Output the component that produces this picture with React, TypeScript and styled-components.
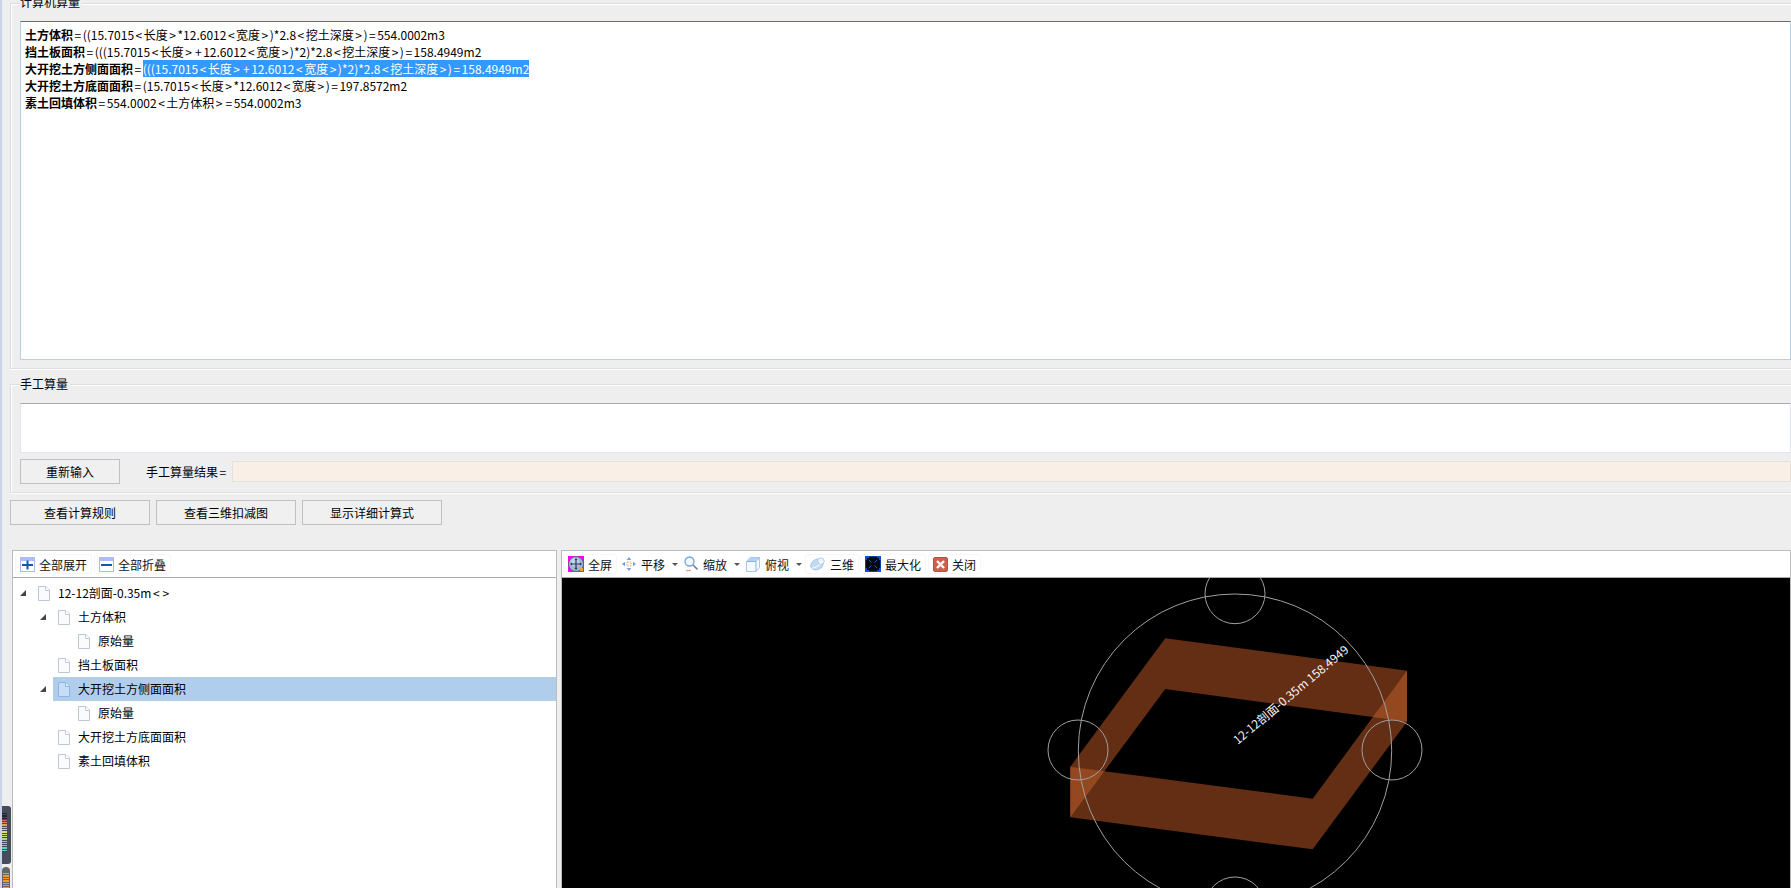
import React from "react";
import styled, { createGlobalStyle } from "styled-components";

const Global = createGlobalStyle`
  html, body { margin: 0; padding: 0; height: 888px; overflow: hidden; background: #eeeeee; }
  body { font-family: "Noto Sans CJK SC", "Liberation Sans", sans-serif; font-size: 12px; color: #000; }
`;

const Page = styled.div`
  position: relative;
  box-sizing: border-box;
  width: 1791px;
  height: 888px;
  overflow: hidden;
  background: #eeeeee;
  border-left: 2px solid #cbd4e6;
  display: flex;
  flex-direction: column;
`;

const Group = styled.section<{ $height: number; $top: number }>`
  position: relative;
  box-sizing: border-box;
  flex: none;
  height: ${(p) => p.$height}px;
  margin: ${(p) => p.$top}px -10px 0 8px;
  padding: 17px 9px 0;
  border: 1px solid #dcdcdc;
  box-shadow: inset 1px 1px 0 #fff, 0 1px 0 #fff;
`;

const Legend = styled.div<{ $top: number }>`
  position: absolute;
  left: 9px;
  top: ${(p) => p.$top}px;
  line-height: 16px;
  padding-right: 2px;
  background: #eeeeee;
`;

const Formulas = styled.div`
  box-sizing: border-box;
  height: 339px;
  padding: 4px 4px;
  background: #fff;
  border: 1px solid #b8d0e4;
  border-top-color: #3e78a8;
  line-height: 17px;
`;

const FormulaLine = styled.div`
  height: 17px;
  white-space: nowrap;
`;

const FormulaName = styled.b`
  font-weight: 700;
`;

const Selected = styled.span`
  background: #3399ff;
  color: #fff;
`;

const Sym = styled.span`
  padding: 0 1.5px;
`;

const Editor = styled.div`
  box-sizing: border-box;
  height: 50px;
  margin-top: 1px;
  background: #fff;
  border: 1px solid #dfe4ee;
  border-top-color: #aaaaaa;
`;

const InputRow = styled.div`
  display: flex;
  align-items: center;
  height: 25px;
  margin-top: 6px;
`;

const Button = styled.button<{ $width: number }>`
  box-sizing: border-box;
  flex: none;
  width: ${(p) => p.$width}px;
  height: 25px;
  padding: 0;
  background: #f0f0f0;
  border: 1px solid #c0c0c0;
  font: inherit;
  color: #000;
`;

const ResultLabel = styled.span`
  margin-left: 26px;
  width: 86px;
  flex: none;
  white-space: nowrap;
`;

const ResultBox = styled.div`
  flex: 1;
  height: 21px;
  box-sizing: border-box;
  background: #f9efe6;
  border: 1px solid #e6e0da;
`;

const ActionRow = styled.div`
  display: flex;
  gap: 6px;
  flex: none;
  margin: 7px 0 0 8px;
`;

const Workspace = styled.div`
  display: flex;
  flex: 1;
  gap: 4px;
  min-height: 0;
  margin: 25px 0 0 10px;
`;

const Panel = styled.div<{ $width?: number }>`
  box-sizing: border-box;
  ${(p) => (p.$width ? `width: ${p.$width}px; flex: none;` : "flex: 1;")}
  display: flex;
  flex-direction: column;
  background: #fff;
  border: 1px solid #bcbcbc;
  border-bottom: none;
  min-width: 0;
`;

const Toolbar = styled.div<{ $inset: number }>`
  box-sizing: border-box;
  flex: none;
  height: 27px;
  display: flex;
  align-items: center;
  padding-left: ${(p) => p.$inset}px;
  background: #fff;
  border-bottom: 1px solid #aaaaaa;
`;

const Tool = styled.div<{ $outlined?: boolean; $after?: number; $gap?: number }>`
  display: flex;
  align-items: center;
  box-sizing: border-box;
  height: 20px;
  gap: ${(p) => p.$gap ?? 4}px;
  padding: 0 ${(p) => (p.$outlined ? 4 : 0)}px;
  border: ${(p) => (p.$outlined ? "1px solid #f6f6f6" : "none")};
  border-radius: 3px;
  margin-right: ${(p) => p.$after ?? 0}px;
  white-space: nowrap;
  color: #111;
  svg { display: block; flex: none; }
`;

const Caret = styled.span`
  width: 0;
  height: 0;
  margin-left: 2px;
  border-left: 3px solid transparent;
  border-right: 3px solid transparent;
  border-top: 3px solid #555;
`;

const Tree = styled.div`
  flex: 1;
  padding-top: 3px;
  background: #fff;
`;

const Row = styled.div<{ $level: number }>`
  display: flex;
  align-items: center;
  height: 24px;
  padding-left: ${(p) => 7 + p.$level * 20}px;
`;

const ArrowSlot = styled.span`
  flex: none;
  width: 13px;
  display: flex;
  align-items: center;
`;

const Node = styled.div<{ $selected?: boolean }>`
  flex: 1;
  height: 24px;
  display: flex;
  align-items: center;
  gap: 8px;
  padding-left: 5px;
  background: ${(p) => (p.$selected ? "#b1cdec" : "transparent")};
  white-space: nowrap;
  svg { display: block; flex: none; }
`;

const NodeLabel = styled.span`
  margin-bottom: 1px;
`;

const Canvas = styled.div`
  flex: 1;
  background: #000;
  min-height: 0;
  overflow: hidden;
  svg { display: block; }
`;

const CanvasLabel = styled.text`
  font-family: "Noto Sans CJK SC", "Liberation Sans", sans-serif;
  font-size: 12px;
  fill: #f4f4f4;
`;

const MeterBody = styled.div`
  position: absolute;
  left: -2px;
  top: 806px;
  width: 11px;
  height: 58px;
  box-sizing: border-box;
  padding: 7px 0 0 2px;
  background: #474c5c;
  border-radius: 0 3px 3px 0;
  display: flex;
  flex-direction: column;
  gap: 1px;
`;

const MeterBar = styled.span<{ $color: string }>`
  display: block;
  width: 5px;
  height: 1.3px;
  background: ${(p) => p.$color};
`;

const MeterTail = styled.div`
  position: absolute;
  left: 0;
  top: 867px;
  width: 8px;
  height: 24px;
  box-sizing: border-box;
  padding: 6px 0 0 1px;
  border-radius: 4px 4px 0 0;
  background: #666;
  display: flex;
  flex-direction: column;
  gap: 1px;
`;

const TailBar = styled.span`
  display: block;
  width: 6px;
  height: 1.4px;
  background: #f09a2e;
`;

const Triangle = () => (
  <svg width="6" height="6" viewBox="0 0 6 6">
    <polygon points="6,0 6,6 0,6" fill="#444" />
  </svg>
);

const Doc = ({ selected }: { selected?: boolean }) => (
  <svg width="12" height="15" viewBox="0 0 12 15">
    <path
      d="M.5.5H8L11.5 4V14.5H.5Z"
      fill={selected ? "#c6def8" : "#fafbfd"}
      stroke={selected ? "#8fb4dc" : "#bcc6d4"}
    />
    <path d="M7.5.5V4.5H11.5" fill={selected ? "#e4f0fc" : "#fff"} stroke={selected ? "#8fb4dc" : "#c4ccd8"} />
  </svg>
);

const BoxIcon = ({ plus }: { plus?: boolean }) => (
  <svg width="15" height="15" viewBox="0 0 15 15">
    <rect x=".5" y=".5" width="14" height="14" fill="#fff" stroke="#a9b9f0" />
    <rect x="0" y="0" width="15" height="4" fill="#aebcf0" />
    <rect x="2" y="7" width="11" height="2" fill="#0b5cab" />
    {plus && <rect x="6.5" y="3.5" width="2" height="9" fill="#0b5cab" />}
  </svg>
);

const FullIcon = () => (
  <svg width="16" height="16" viewBox="0 0 16 16">
    <rect width="16" height="16" fill="#ff00ff" />
    <circle cx="8" cy="8" r="7.5" fill="#a4b6d2" stroke="#56637c" />
    <circle cx="7" cy="6" r="4" fill="#c4d2e6" />
    <path d="M8 3V13M3 8H13" stroke="#22385e" strokeWidth="1.2" />
    <path d="M8 2L6.5 4H9.5ZM8 14L6.5 12H9.5ZM2 8L4 6.5V9.5ZM14 8L12 6.5V9.5Z" fill="#22385e" />
    <rect x="12" y="12" width="3" height="3" fill="#e8a040" />
  </svg>
);

const PanIcon = () => (
  <svg width="14" height="16" viewBox="0 0 14 16">
    <path d="M7 1L4.8 4H9.2ZM7 15L4.8 12H9.2ZM0 8L3 5.8V10.2ZM14 8L11 5.8V10.2Z" fill="#6f9fdc" />
    <rect x="5" y="6" width="4" height="4" fill="#fff" stroke="#eaa26a" strokeDasharray="1.5 1" />
  </svg>
);

const ZoomIcon = () => (
  <svg width="14" height="16" viewBox="0 0 14 16">
    <circle cx="5.5" cy="5.5" r="4.5" fill="#f4f9ff" stroke="#6ea4dc" strokeWidth="1.3" />
    <path d="M9 9L13.5 13.5" stroke="#77808c" strokeWidth="1.6" />
    <path d="M2 14.5H7" stroke="#eaa27a" />
    <path d="M2 14.5L3.5 13.3V15.7ZM7 14.5L5.5 13.3V15.7Z" fill="#eaa27a" />
  </svg>
);

const CubeIcon = () => (
  <svg width="14" height="15" viewBox="0 0 14 15">
    <path d="M4 .5H13.5V10.5L10 14.5H.5V4.5Z" fill="#f6faff" stroke="#a8c8ec" />
    <path d="M.5 4.5H10V14.5M10 4.5L13.5 .5" fill="none" stroke="#8cb4e2" />
    <path d="M4 1H13L10 4H1.5Z" fill="#b4d2f2" />
  </svg>
);

const PlanetIcon = () => (
  <svg width="15" height="14" viewBox="0 0 15 14">
    <ellipse cx="7" cy="7.5" rx="6.5" ry="5" transform="rotate(-30 7 7.5)" fill="#c4daf2" stroke="#a8c6e8" />
    <circle cx="11" cy="4" r="3.2" fill="#ecf4fc" stroke="#b4cee9" />
    <path d="M2 11C6 11 10 8 13 4" stroke="#fff" fill="none" />
  </svg>
);

const MaxIcon = () => (
  <svg width="16" height="16" viewBox="0 0 16 16">
    <rect x=".5" y=".5" width="15" height="15" fill="#000814" stroke="#0a3fb0" />
    <path d="M0 0H4V2H2V4H0ZM16 0V4H14V2H12V0ZM0 16V12H2V14H4V16ZM16 16H12V14H14V12H16Z" fill="#0b50d8" />
    <path d="M4 4L6.5 6.5M12 4L9.5 6.5M4 12L6.5 9.5M12 12L9.5 9.5" stroke="#245ab0" />
  </svg>
);

const CloseIcon = () => (
  <svg width="15" height="15" viewBox="0 0 15 15">
    <rect x=".5" y=".5" width="14" height="14" rx="1.5" fill="#d0604a" stroke="#a4584c" />
    <path d="M4 4L11 11M11 4L4 11" stroke="#fff" strokeWidth="2.4" />
  </svg>
);

const withSymbols = (text: string) =>
  text.split(/([<>=+])/).map((part, i) =>
    /^[<>=+]$/.test(part) ? <Sym key={i}>{part}</Sym> : part
  );

const formulas: [string, string, boolean?][] = [
  ["土方体积", "((15.7015<长度>*12.6012<宽度>)*2.8<挖土深度>)=554.0002m3"],
  ["挡土板面积", "(((15.7015<长度>+12.6012<宽度>)*2)*2.8<挖土深度>)=158.4949m2"],
  ["大开挖土方侧面面积", "(((15.7015<长度>+12.6012<宽度>)*2)*2.8<挖土深度>)=158.4949m2", true],
  ["大开挖土方底面面积", "(15.7015<长度>*12.6012<宽度>)=197.8572m2"],
  ["素土回填体积", "554.0002<土方体积>=554.0002m3"],
];

const treeRows: { level: number; label: string; open?: boolean; selected?: boolean }[] = [
  { level: 0, label: "12-12剖面-0.35m<>", open: true },
  { level: 1, label: "土方体积", open: true },
  { level: 2, label: "原始量" },
  { level: 1, label: "挡土板面积" },
  { level: 1, label: "大开挖土方侧面面积", open: true, selected: true },
  { level: 2, label: "原始量" },
  { level: 1, label: "大开挖土方底面面积" },
  { level: 1, label: "素土回填体积" },
];

const meterColors = [
  "#d06a5c", "#d8885c", "#e0a060", "#e4b868", "#e6cc70", "#e4d878", "#dcdc7c", "#c4dc7c",
  "#a8d880", "#90d488", "#7cd498", "#6cd4ac", "#60d0c0", "#5ccccc",
];

export default function App() {
  return (
    <Page>
      <Global />
      <Group $height={366} $top={3}>
        <Legend $top={-10}>计算机算量</Legend>
        <Formulas>
          {formulas.map(([name, value, selected]) => (
            <FormulaLine key={name}>
              <FormulaName>{name}</FormulaName>
              <Sym>=</Sym>
              {selected ? <Selected>{withSymbols(value)}</Selected> : withSymbols(value)}
            </FormulaLine>
          ))}
        </Formulas>
      </Group>

      <Group $height={109} $top={15}>
        <Legend $top={-9}>手工算量</Legend>
        <Editor />
        <InputRow>
          <Button $width={100}>重新输入</Button>
          <ResultLabel>手工算量结果<Sym>=</Sym></ResultLabel>
          <ResultBox />
        </InputRow>
      </Group>

      <ActionRow>
        <Button $width={140}>查看计算规则</Button>
        <Button $width={140}>查看三维扣减图</Button>
        <Button $width={140}>显示详细计算式</Button>
      </ActionRow>

      <Workspace>
        <Panel $width={545}>
          <Toolbar $inset={2}>
            <Tool $outlined $after={2}><BoxIcon plus />全部展开</Tool>
            <Tool $outlined><BoxIcon />全部折叠</Tool>
          </Toolbar>
          <Tree>
            {treeRows.map((r, i) => (
              <Row key={i} $level={r.level}>
                <ArrowSlot>{r.open && <Triangle />}</ArrowSlot>
                <Node $selected={r.selected}>
                  <Doc selected={r.selected} />
                  <NodeLabel>{withSymbols(r.label)}</NodeLabel>
                </Node>
              </Row>
            ))}
          </Tree>
        </Panel>

        <Panel>
          <Toolbar $inset={1}>
            <Tool $outlined $after={5}><FullIcon />全屏</Tool>
            <Tool $gap={5} $after={6}><PanIcon />平移<Caret /></Tool>
            <Tool $gap={5} $after={6}><ZoomIcon />缩放<Caret /></Tool>
            <Tool $gap={5} $after={3}><CubeIcon />俯视<Caret /></Tool>
            <Tool $outlined $gap={5} $after={1}><PlanetIcon />三维</Tool>
            <Tool $outlined $after={2}><MaxIcon />最大化</Tool>
            <Tool $outlined><CloseIcon />关闭</Tool>
          </Toolbar>
          <Canvas>
            <svg width="1230" height="310" viewBox="561 578 1230 310">
              <path
                fill="#632e14"
                fillRule="evenodd"
                d="M1164.3 638.3L1406 670.7V721.7L1311.7 849.3L1069.3 817.3V766.7ZM1164.3 689L1371.8 717.1L1311.7 798.7L1103.4 771.2Z"
              />
              <polygon points="1406,670.7 1406,721.7 1371.8,717.1" fill="#944820" />
              <polygon points="1069.3,766.7 1103.4,771.2 1069.3,817.3" fill="#944820" />
              <g fill="none" stroke="#a0a0a0" strokeWidth="1">
                <circle cx="1234" cy="750.7" r="156.7" />
                <circle cx="1077" cy="750" r="30" />
                <circle cx="1391" cy="750" r="30" />
                <circle cx="1234" cy="593.7" r="30" />
                <circle cx="1234" cy="907" r="30" />
              </g>
              <CanvasLabel x="1290" y="699" textAnchor="middle" transform="rotate(-40 1290 695)">
                12-12剖面-0.35m 158.4949
              </CanvasLabel>
            </svg>
          </Canvas>
        </Panel>
      </Workspace>

      <MeterBody>
        <MeterBar $color="#22242c" />
        <MeterBar $color="#22242c" />
        <MeterBar $color="#22242c" />
        {meterColors.map((c, i) => (
          <MeterBar key={i} $color={c} />
        ))}
      </MeterBody>
      <MeterTail>
        {[0, 1, 2, 3, 4, 5, 6].map((i) => (
          <TailBar key={i} />
        ))}
      </MeterTail>
    </Page>
  );
}
